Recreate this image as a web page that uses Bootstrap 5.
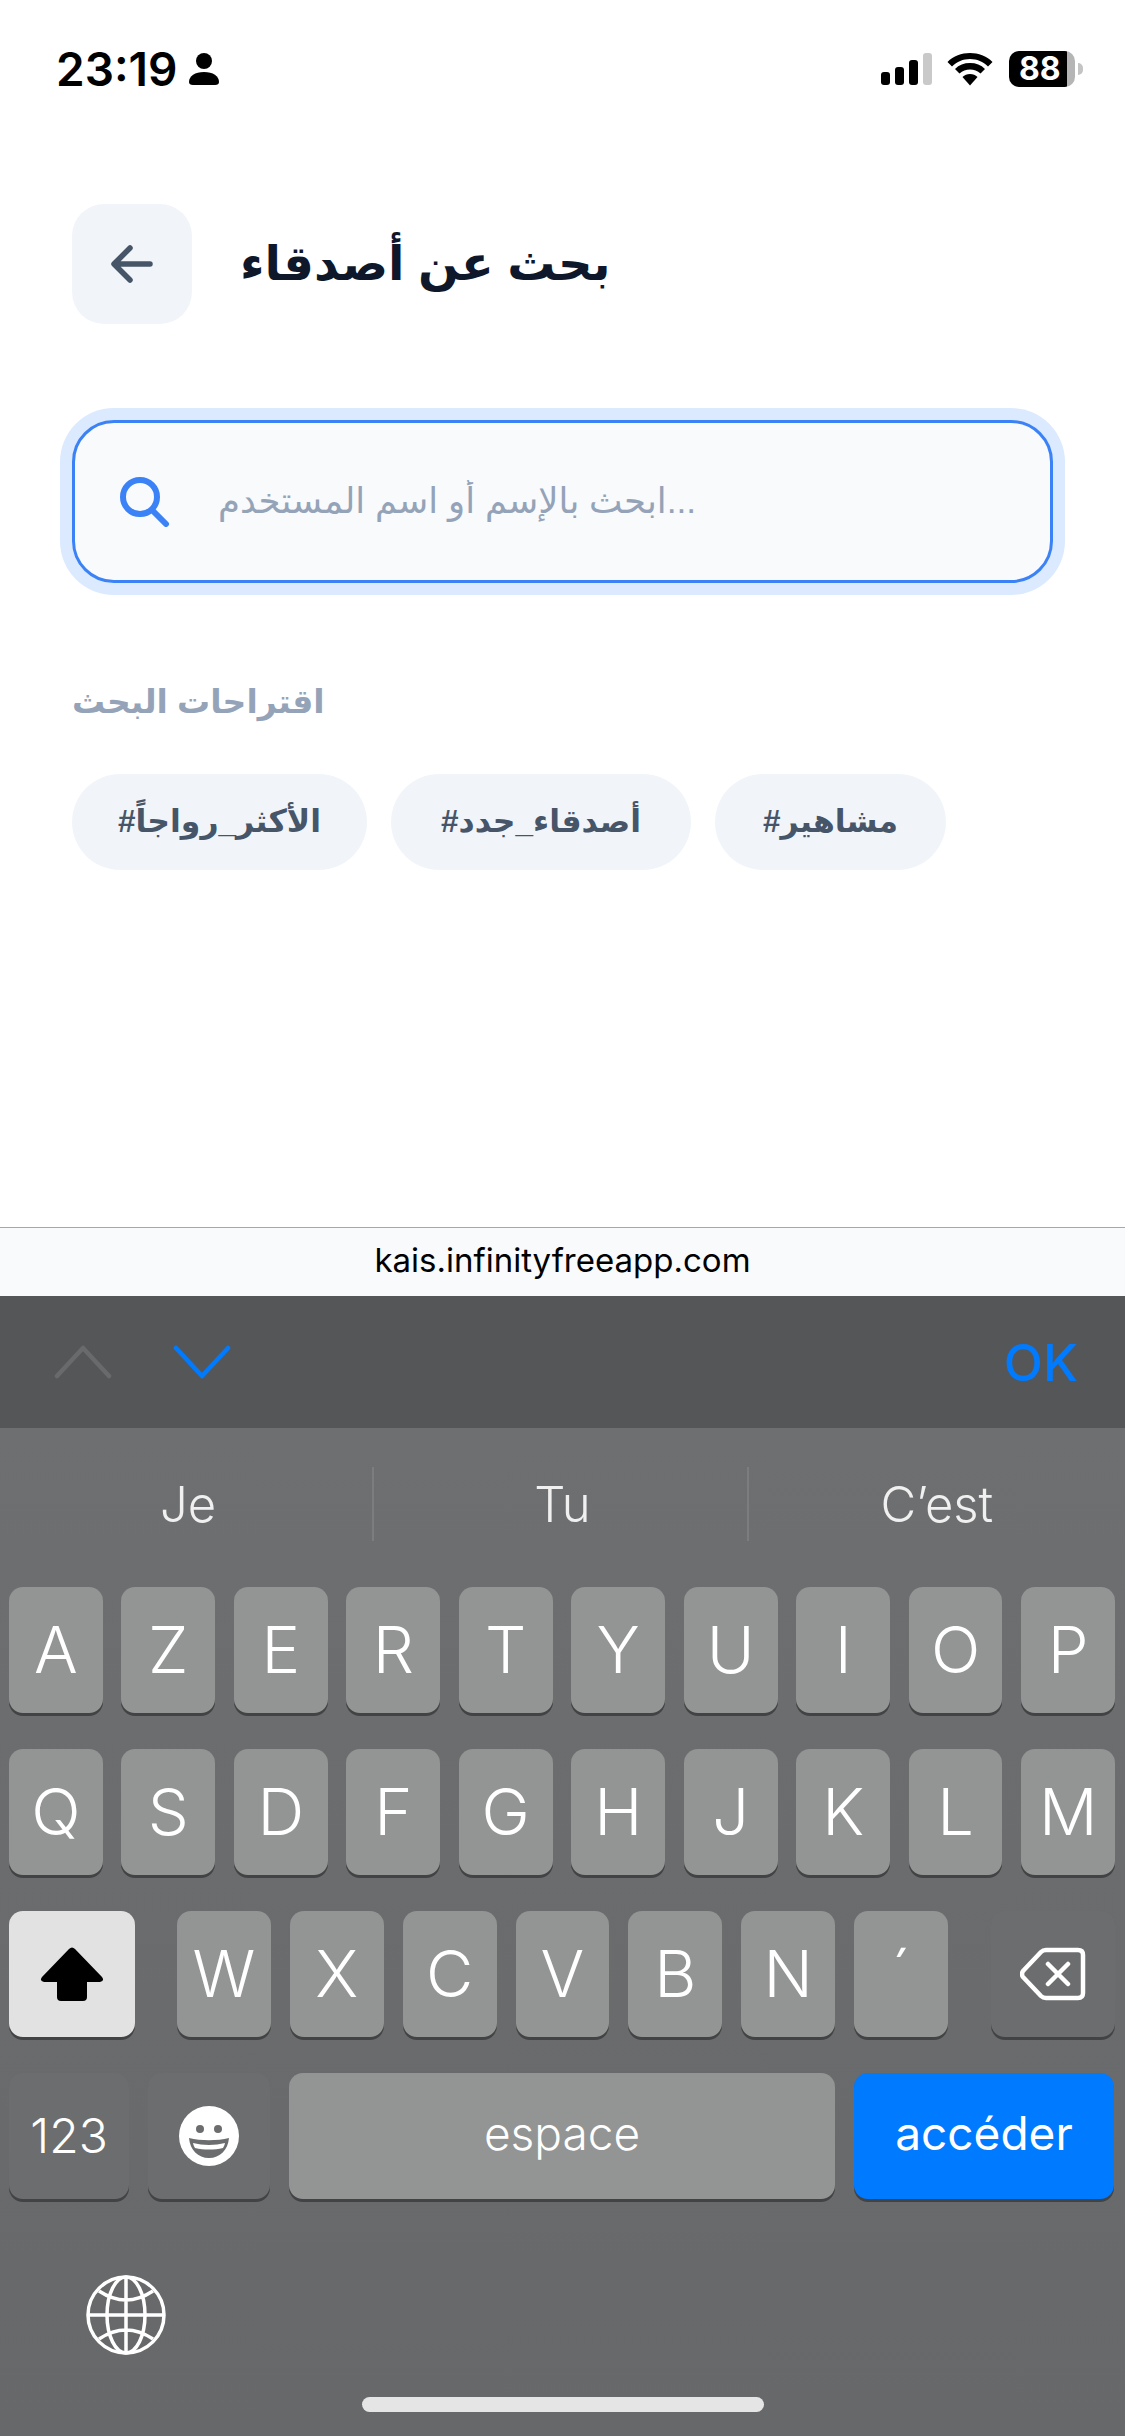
<!DOCTYPE html>
<html lang="ar" dir="ltr">

<head>
  <meta charset="UTF-8" />
  <title>بحث عن أصدقاء</title>
  <link href="https://cdn.jsdelivr.net/npm/bootstrap@5.3.0/dist/css/bootstrap.min.css" rel="stylesheet">
  <script src="https://cdn.jsdelivr.net/npm/bootstrap@5.3.0/dist/js/bootstrap.bundle.min.js"></script>
  <style>
    body {
      width: 1125px;
      height: 2436px;
      overflow: hidden;
      background: #fff;
      font-family: "Liberation Sans", "DejaVu Sans", sans-serif;
    }

    .status-bar {
      height: 204px;
      padding: 44px 42px 0 56px;
      align-items: flex-start;
    }

    .status-time {
      font: 600 46px/50px Inter, sans-serif;
      color: #000;
      margin-right: 12px;
    }

    .person-icon { margin-top: 9px; }
    .signal-icon { margin-top: 9px; }
    .wifi-icon { margin: 8px 0 0 15px; }

    .battery {
      width: 66px;
      height: 36px;
      margin-left: 16px;
      margin-top: 7px;
      border-radius: 10px;
      background: linear-gradient(90deg, #000 88%, #b5b5b5 88%);
      color: #fff;
      font: 700 32px/36px Inter, sans-serif;
      padding-left: 10px;
    }

    .battery-nub {
      width: 5px;
      height: 12px;
      margin-top: 19px;
      margin-left: 3px;
      border-radius: 0 6px 6px 0;
      background: #c4c4c4;
    }

    .page-head {
      padding-left: 72px;
      height: 120px;
    }

    .back-btn {
      width: 120px;
      height: 120px;
      border-radius: 32px;
      background: #f1f5f9;
      border: 0;
    }

    .page-title {
      font-size: 48px;
      font-weight: 700;
      color: #0f172a;
      margin: 0 0 0 48px;
    }

    .search-box {
      margin: 96px 72px 0;
      height: 163px;
      padding-left: 45px;
      border: 3px solid #3b82f6;
      border-radius: 42px;
      background: #f8fafc;
      box-shadow: 0 0 0 12px #dbeafe;
    }

    .search-input {
      border: 0;
      outline: 0;
      background: transparent;
      width: 800px;
      margin-left: 46px;
      font-size: 35.5px;
      color: #94a3b8;
    }

    .search-input::placeholder {
      color: #94a3b8;
    }

    .hint-title {
      align-self: flex-start;
      margin: 97px 0 0 72px;
      font-size: 33px;
      font-weight: 700;
      color: #94a3b8;
      line-height: 44px;
    }

    .chip-row {
      margin: 50px 0 0 72px;
    }

    .chip {
      height: 96px;
      border-radius: 48px;
      background: #f1f5f9;
      color: #475569;
      font-size: 31.5px;
      font-weight: 700;
    }

    .chip-a { width: 295px; }
    .chip-b { width: 300px; }
    .chip-c { width: 231px; }

    .spacer-fill { flex: 1; }

    .url-bar {
      height: 69px;
      border-top: 1px solid #a8a8a8;
      background: #f9fafc;
      color: #000;
      font: 400 33px/1 Inter, sans-serif;
      padding-bottom: 4px;
    }

    .kb-tools {
      height: 132px;
      background: #555657;
      padding: 0 47px 0 54px;
    }

    .chev-down { margin-left: 61px; }

    .kb-ok {
      font: 500 51px/1 Inter, sans-serif;
      color: #007aff;
    }

    .keyboard {
      height: 1008px;
      background: linear-gradient(180deg, #6e6f70 0, #676869 100%);
      color: #fff;
      font-family: Inter, Roboto, sans-serif;
      font-weight: 300;
    }

    .suggest-row {
      height: 132px;
      padding: 39px 4px 0 0;
    }

    .suggest-item {
      flex: 1;
      height: 74px;
      padding: 2px 0 0 4px;
      font-size: 49px;
      color: #f0f0f0;
    }

    .suggest-item + .suggest-item {
      border-left: 2px solid #7c7d7e;
    }

    .key-stack {
      padding: 27px 10px 0 9px;
      gap: 36px;
    }

    .key-row {
      gap: 18.9px;
      height: 126px;
    }

    .kkey {
      flex: 1 1 0;
      min-width: 0;
      height: 126px;
      border-radius: 14px;
      background: #939494;
      box-shadow: 0 3px 0 #424344;
      font-size: 65px;
    }

    .kkey.key-dark { background: #6c6d6e; }
    .kkey.key-shift { flex: 0 0 126px; background: #e2e2e2; }
    .kkey.key-del { flex: 0 0 124px; margin-left: 24px; }
    .kkey.key-num { flex: 0 0 120px; font-size: 48px; }
    .kkey.key-emoji { flex: 0 0 122px; }
    .kkey.key-space { flex: 0 0 546px; font-size: 46px; padding-bottom: 6px; }
    .kkey.key-go { flex: 0 0 260px; background: #007aff; font-size: 46px; font-weight: 400; padding-bottom: 6px; }

    .row-shift { gap: 19px; }
    .row-shift .key-shift { margin-right: 23px; }
    .row-bottom { gap: 19px; }

    .globe-row {
      padding: 76px 0 0 86px;
    }

    .home-bar {
      width: 402px;
      height: 15px;
      margin: 42px auto 0;
      border-radius: 8px;
      background: #e5e5e5;
    }
  </style>
</head>

<body class="d-flex flex-column">
  <div class="status-bar d-flex">
    <span class="status-time">23:19</span>
    <svg class="person-icon" width="30" height="32" viewBox="0 0 30 32"><circle cx="15" cy="8" r="8" fill="#000"/><path d="M4 32q-4 0-4-3c0-6 6-10 15-10s15 4 15 10q0 3-4 3z" fill="#000"/></svg>
    <div class="ms-auto d-flex align-items-start">
      <svg class="signal-icon" width="51" height="32" viewBox="0 0 51 32"><rect x="0" y="19" width="9" height="13" rx="3" fill="#000"/><rect x="14" y="14" width="9" height="18" rx="3" fill="#000"/><rect x="28" y="7" width="9" height="25" rx="3" fill="#000"/><rect x="42" y="0" width="9" height="32" rx="3" fill="#c9c9c9"/></svg>
      <svg class="wifi-icon" width="46" height="34" viewBox="0 0 46 34"><path d="M23 7c7 0 13 2.700 18 7.500l4.500-4.600C39.500 4 31.500 1 23 1S6.500 4 .5 9.900L5 14.500C10 9.700 16 7 23 7z" fill="#000"/><path d="M23 17.500c4 0 7.500 1.500 10.500 4l4.500-4.600C34 13 29 11 23 11S12 13 8 16.900l4.500 4.600c3-2.500 6.500-4 10.500-4z" fill="#000"/><path d="M23 22c-3 0-5.500 1-7.500 3L23 33.500l7.500-8.500c-2-2-4.500-3-7.500-3z" fill="#000"/></svg>
      <div class="battery">88</div>
      <div class="battery-nub"></div>
    </div>
  </div>

  <div class="page-head d-flex align-items-center">
    <button class="back-btn d-flex align-items-center justify-content-center p-0" type="button" aria-label="back">
      <svg width="42" height="38" viewBox="0 0 42 38" fill="none" stroke="#475569" stroke-width="5.500" stroke-linecap="round" stroke-linejoin="round"><path d="M39 19H4M19 3 3 19l16 16"/></svg>
    </button>
    <h1 class="page-title" dir="rtl">بحث عن أصدقاء</h1>
  </div>

  <div class="search-box d-flex align-items-center">
    <svg width="50" height="50" viewBox="0 0 50 50" fill="none" stroke="#3b82f6" stroke-width="6" stroke-linecap="round"><circle cx="20" cy="20" r="17"/><path d="M32 33l14 14"/></svg>
    <input class="search-input" type="text" placeholder="ابحث بالإسم أو اسم المستخدم..." dir="ltr">
  </div>

  <div class="hint-title" dir="rtl">اقتراحات البحث</div>

  <div class="chip-row d-flex gap-4">
    <span class="chip chip-a d-flex align-items-center justify-content-center">#الأكثر_رواجاً</span>
    <span class="chip chip-b d-flex align-items-center justify-content-center">#أصدقاء_جدد</span>
    <span class="chip chip-c d-flex align-items-center justify-content-center">#مشاهير</span>
  </div>

  <div class="spacer-fill"></div>

  <div class="url-bar d-flex align-items-center justify-content-center">kais.infinityfreeapp.com</div>

  <div class="kb-tools d-flex align-items-center">
    <svg width="58" height="34" viewBox="0 0 58 34" fill="none" stroke="#696a6b" stroke-width="4.500" stroke-linecap="round" stroke-linejoin="round"><path d="M3 31 29 3l26 28"/></svg>
    <svg class="chev-down" width="58" height="34" viewBox="0 0 58 34" fill="none" stroke="#007aff" stroke-width="4.500" stroke-linecap="round" stroke-linejoin="round"><path d="M3 3l26 28L55 3"/></svg>
    <span class="kb-ok ms-auto">OK</span>
  </div>

  <div class="keyboard">
    <div class="suggest-row d-flex">
      <div class="suggest-item d-flex align-items-center justify-content-center">Je</div>
      <div class="suggest-item d-flex align-items-center justify-content-center">Tu</div>
      <div class="suggest-item d-flex align-items-center justify-content-center">C’est</div>
    </div>

    <div class="key-stack d-flex flex-column" id="keys"></div>

    <div class="globe-row">
      <svg width="80" height="80" viewBox="0 0 80 80" fill="none" stroke="#fff" stroke-width="3.500"><circle cx="40" cy="40" r="38"/><ellipse cx="40" cy="40" rx="19" ry="38"/><path d="M40 2v76M2 40h76M13 16Q40 34 67 16M13 64Q40 46 67 64"/></svg>
    </div>
    <div class="home-bar"></div>
  </div>

  <script>
    const keyRows = ['AZERTYUIOP', 'QSDFGHJKLM'];
    const stack = document.getElementById('keys');

    keyRows.forEach(letters => {
      const row = document.createElement('div');
      row.className = 'key-row d-flex';
      [...letters].forEach(l => {
        row.innerHTML += `<div class="kkey d-flex align-items-center justify-content-center">${l}</div>`;
      });
      stack.appendChild(row);
    });

    const shiftRow = document.createElement('div');
    shiftRow.className = 'key-row row-shift d-flex';
    shiftRow.innerHTML = `<div class="kkey key-shift d-flex align-items-center justify-content-center">
        <svg width="64" height="56" viewBox="0 0 64 56"><path d="M29 3q3-3 6 0L62 31q3 4-2 5H47v15q0 4-4 4H21q-4 0-4-4V36H4q-5-1-2-5z" fill="#000"/></svg>
      </div>`;
    [...'WXCVBN´'].forEach(l => {
      shiftRow.innerHTML += `<div class="kkey d-flex align-items-center justify-content-center">${l}</div>`;
    });
    shiftRow.innerHTML += `<div class="kkey key-dark key-del d-flex align-items-center justify-content-center">
        <svg width="66" height="54" viewBox="0 0 66 54" fill="none" stroke="#fff" stroke-width="4.500" stroke-linejoin="round" stroke-linecap="round"><path d="M26 3H58q5 0 5 5v38q0 5-5 5H26q-3 0-5-2L3 30q-2-3 0-6L21 5q2-2 5-2zM28 17l20 20M48 17 28 37"/></svg>
      </div>`;
    stack.appendChild(shiftRow);

    const bottomRow = document.createElement('div');
    bottomRow.className = 'key-row row-bottom d-flex';
    bottomRow.innerHTML = `<div class="kkey key-dark key-num d-flex align-items-center justify-content-center">123</div>
      <div class="kkey key-dark key-emoji d-flex align-items-center justify-content-center">
        <svg width="60" height="60" viewBox="0 0 60 60"><circle cx="30" cy="30" r="30" fill="#fff"/><circle cx="21" cy="23" r="4" fill="#6c6d6e"/><circle cx="39" cy="23" r="4" fill="#6c6d6e"/><path d="M10 32c12 3 28 3 40 0-1 12-9 20-20 20S11 44 10 32z" fill="#6c6d6e"/><path d="M14 37c10 2.500 22 2.500 32 0-.5 2-1 3.500-2 5-9 2-19 2-28 0-1-1.500-1.500-3-2-5z" fill="#fff"/></svg>
      </div>
      <div class="kkey key-space d-flex align-items-center justify-content-center">espace</div>
      <div class="kkey key-go d-flex align-items-center justify-content-center">accéder</div>`;
    stack.appendChild(bottomRow);
  </script>
</body>

</html>
